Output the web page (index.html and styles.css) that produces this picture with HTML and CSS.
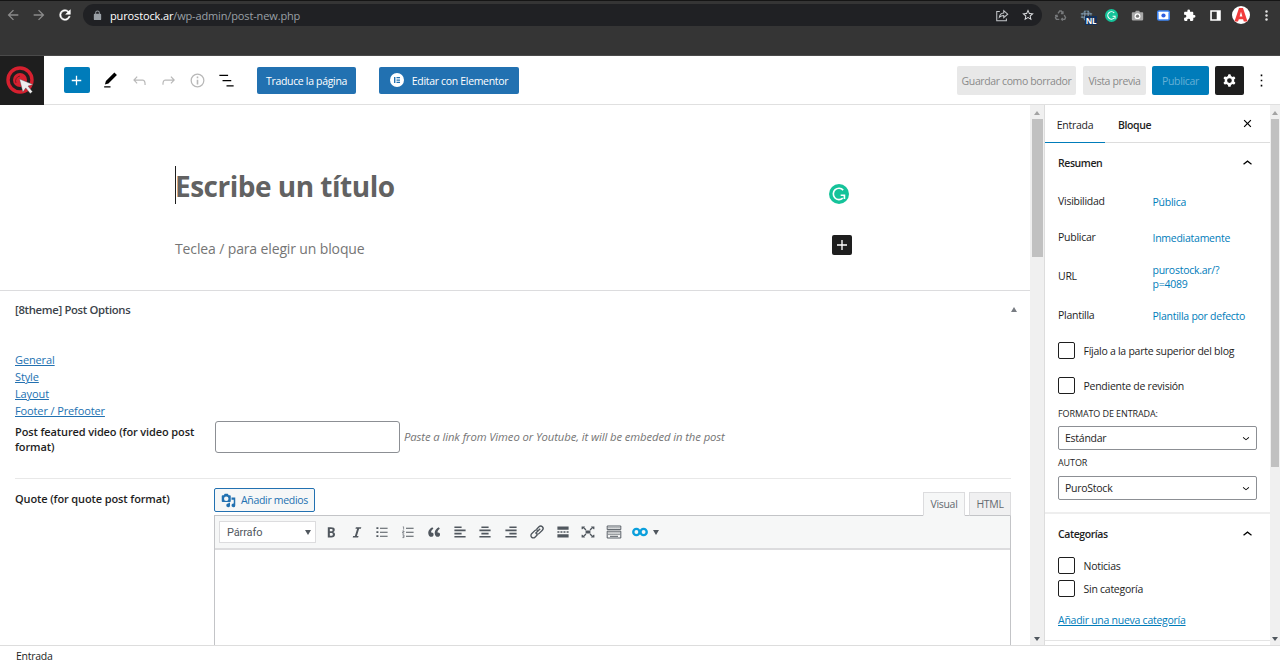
FILE: index.html
```
<!DOCTYPE html>
<html lang="es">
<head>
  <meta charset="utf-8">
  <title>Añadir nueva entrada</title>
  <meta name="viewport" content="width=device-width, initial-scale=1">
  <link rel="stylesheet" href="styles.css">
</head>
<body>
<div class="browser">
  <div class="nav-icons">
    <svg class="dim" viewBox="0 0 24 24"><path d="M20 11H7.830l5.590-5.590L12 4l-8 8 8 8 1.410-1.410L7.830 13H20z"/></svg>
    <svg class="dim" viewBox="0 0 24 24"><path d="M12 4l-1.410 1.410L16.170 11H4v2h12.170l-5.580 5.590L12 20l8-8z"/></svg>
    <svg class="reload" viewBox="0 0 24 24"><path d="M17.650 6.350A7.960 7.960 0 0 0 12 4a8 8 0 1 0 7.730 10h-2.080A6 6 0 1 1 12 6c1.660 0 3.140.69 4.220 1.780L13 11h7V4z"/></svg>
  </div>
  <div class="omnibox">
    <svg class="lock" viewBox="0 0 24 24"><path d="M18 8h-1V6A5 5 0 0 0 7 6v2H6a2 2 0 0 0-2 2v10c0 1.100.9 2 2 2h12a2 2 0 0 0 2-2V10a2 2 0 0 0-2-2zM9 6a3 3 0 0 1 6 0v2H9z"/></svg>
    <span class="url"><b>purostock.ar</b>/wp-admin/post-new.php</span>
    <svg viewBox="0 0 16 16" fill="none" stroke="#c4c7ca" stroke-width="1.2"><path d="M5.500 4H2v10.500h11V12M5 10.500c.4-3 2.200-4.700 5-4.900V3l4.500 4-4.500 4V8.500C8 8.500 6.500 9 5 10.500z"/></svg>
    <svg viewBox="0 0 24 24" fill="#dfe1e4"><path d="M22 9.240l-7.190-.62L12 2 9.190 8.630 2 9.240l5.460 4.730L5.820 21 12 17.270 18.180 21l-1.630-7.030L22 9.240zM12 15.400l-3.760 2.270 1-4.280-3.320-2.880 4.380-.38L12 6.100l1.710 4.040 4.380.38-3.320 2.880 1 4.280L12 15.400z"/></svg>
  </div>
  <div class="extensions">
    <span><svg viewBox="0 0 16 16" fill="none" stroke="#77797b" stroke-width="1.7"><path d="M5 5.500l2-3h2l1.800 2.800M11 2.800v2.700H8.500M12.500 7.500l1.700 3-1 2.200H9.500M10.800 11l-1.500 1.700 1.500 1.600M6.500 12.700H3l-1.200-2L3.500 8M1.300 8.300l2.300-.5.8 2.200"/></svg></span>
    <span class="nl"><svg viewBox="0 0 16 16" fill="none" stroke="#8fa8bd" stroke-width="1.2"><circle cx="8" cy="8" r="5.5" stroke="#4f7183"/><path d="M6 2v12M10 2v12M1 6h14M1 10h14"/></svg><i>NL</i></span>
    <span><svg viewBox="0 0 24 24"><circle cx="12" cy="12" r="12" fill="#15c39a"/><path d="M17 7.300A6.800 6.800 0 1 0 16.500 17M14 13.500h4.500V18" fill="none" stroke="#fff" stroke-width="2"/></svg></span>
    <span><svg viewBox="0 0 16 16"><path d="M2 4h3l1-2h4l1 2h3q1 0 1 1v8q0 1-1 1H2q-1 0-1-1V5q0-1 1-1z" fill="#a8a8a8"/><circle cx="8" cy="8.8" r="3.6" fill="#fff"/><circle cx="8" cy="8.8" r="2" fill="#777"/></svg></span>
    <span><svg viewBox="0 0 16 16"><rect x="0" y="1.500" width="16" height="13" rx="2.500" fill="#3f86f5"/><rect x="2" y="3.500" width="12" height="9" rx=".5" fill="#fff"/><circle cx="8" cy="8" r="2.600" fill="#2f5fe0"/></svg></span>
    <span><svg viewBox="0 0 24 24" fill="#fff"><path d="M20.500 11H19V7c0-1.100-.9-2-2-2h-4V3.500a2.500 2.500 0 0 0-5 0V5H4c-1.100 0-2 .9-2 2v3.800h1.500a2.700 2.700 0 0 1 0 5.400H2V20c0 1.100.9 2 2 2h3.800v-1.500a2.700 2.700 0 0 1 5.400 0V22H17c1.100 0 2-.9 2-2v-4h1.500a2.500 2.500 0 0 0 0-5z"/></svg></span>
    <span><svg viewBox="0 0 16 16"><path d="M1.500 1.500h13v13h-13zM3.500 3.500v9h6v-9z" fill="#fff" fill-rule="evenodd"/></svg></span>
    <span class="avatar"><svg viewBox="0 0 18 18"><circle cx="9" cy="9" r="9" fill="#fff"/><path d="M7 2h4l4.500 13.500h-3.700l-.7-2.300H6.800L6 15.500H2.500zM9 5.800L7.600 10.500h2.800z" fill="#f23c3c" fill-rule="evenodd"/></svg></span>
    <span><svg viewBox="0 0 16 16" fill="#e4e4e4"><circle cx="8" cy="3" r="1.5"/><circle cx="8" cy="8" r="1.5"/><circle cx="8" cy="13" r="1.5"/></svg></span>
  </div>
</div>

<div class="header">
  <div class="logo">
    <svg viewBox="0 0 44 48"><circle cx="20" cy="24" r="12" fill="none" stroke="#d6202f" stroke-width="3.4"/><circle cx="20" cy="24" r="7" fill="#d6202f"/><path d="M16 27a5 5 0 0 1 4-7" fill="none" stroke="#7c1720"/><path d="M19.500 23l13.500 5.500-5 1.600 4.500 5.600-2.300 1.800-4.400-5.600-3 4.200z" fill="#eee" stroke="#444" stroke-width=".4"/></svg>
  </div>
  <button class="inserter"><svg viewBox="0 0 24 24"><path d="M18 11.200h-5.200V6h-1.600v5.200H6v1.600h5.200V18h1.600v-5.200H18z"/></svg></button>
  <div class="tools">
    <svg viewBox="0 0 24 24"><path d="M20.100 5.100L16.900 2 6.200 12.700l-1.300 4.400 4.500-1.300L20.100 5.100zM4 20.800h8v-1.500H4v1.500z"/></svg>
    <svg class="off" viewBox="0 0 24 24"><path d="M18.300 11.700c-.6-.6-1.400-.9-2.300-.9H6.700l2.900-3.300-1.100-1-4.500 5L8.500 16l1-1-2.700-2.700H16c.5 0 .9.2 1.300.5 1 1 1 3.400 1 4.500v.3h1.500v-.2c0-1.500 0-4.300-1.500-5.700z"/></svg>
    <svg class="off" viewBox="0 0 24 24"><path d="M15.600 6.500l-1.100 1 2.900 3.300H8c-.9 0-1.700.3-2.300.9-1.400 1.500-1.400 4.200-1.400 5.600v.2h1.500v-.3c0-1.100 0-3.500 1-4.500.3-.3.7-.5 1.300-.5h9.200L14.500 15l1.100 1.100 4.600-4.600-4.600-5z"/></svg>
    <svg class="off" viewBox="0 0 24 24"><path d="M12 3.200a8.800 8.800 0 1 0 0 17.600 8.800 8.800 0 0 0 0-17.600zm0 16a7.200 7.200 0 1 1 0-14.400 7.200 7.200 0 0 1 0 14.400zM11 17h2v-6h-2v6zm0-8h2V7h-2v2z"/></svg>
    <svg viewBox="0 0 24 24"><path d="M3 4.700h11v1.500H3zM7 11.300h11v1.500H7zM12 18h9v1.500h-9z"/></svg>
  </div>
  <button class="btn translate">Traduce la página</button>
  <button class="btn elementor"><svg viewBox="0 0 14 14"><circle cx="7" cy="7" r="7" fill="#fff"/><path d="M4 4h1.400v6H4zM6.500 4H10v1.300H6.500zM6.500 6.400H10v1.300H6.500zM6.500 8.700H10V10H6.500z" fill="#2271b1"/></svg>Editar con Elementor</button>
  <div class="settings">
    <button class="btn draft">Guardar como borrador</button>
    <button class="btn preview">Vista previa</button>
    <button class="btn publish">Publicar</button>
    <button class="btn cog"><svg viewBox="0 0 24 24"><path fill-rule="evenodd" d="M10.289 4.836A1 1 0 0111.275 4h1.306a1 1 0 01.987.836l.244 1.466c.787.26 1.503.679 2.108 1.218l1.393-.522a1 1 0 011.216.437l.653 1.130a1 1 0 01-.23 1.273l-1.148.944a6.025 6.025 0 010 2.435l1.149.946a1 1 0 01.23 1.272l-.653 1.130a1 1 0 01-1.216.437l-1.394-.522c-.605.54-1.320.958-2.108 1.218l-.244 1.466a1 1 0 01-.987.836h-1.306a1 1 0 01-.986-.836l-.244-1.466a5.995 5.995 0 01-2.108-1.218l-1.394.522a1 1 0 01-1.217-.436l-.653-1.131a1 1 0 01.23-1.272l1.149-.946a6.026 6.026 0 010-2.435l-1.148-.944a1 1 0 01-.23-1.272l.653-1.131a1 1 0 011.217-.437l1.393.522a5.994 5.994 0 012.108-1.218l.244-1.466zM14.929 12a3 3 0 11-6 0 3 3 0 016 0z"/></svg></button>
    <svg class="dots" viewBox="0 0 24 24"><path d="M11 4.500h2v2h-2zM11 11h2v2h-2zM11 17.500h2v2h-2z"/></svg>
  </div>
</div>

<div class="body">
  <div class="content">
    <div class="canvas">
      <h1>Escribe un título</h1>
      <div class="paragraph"><span>Teclea / para elegir un bloque</span>
        <button class="add"><svg viewBox="0 0 24 24"><path d="M18 11.200h-5.200V6h-1.600v5.200H6v1.600h5.200V18h1.600v-5.200H18z"/></svg></button>
      </div>
      <svg class="grammarly" viewBox="0 0 24 24"><circle cx="12" cy="12" r="12" fill="#15c39a"/><path d="M17 7.300A6.800 6.800 0 1 0 16.500 17M14 13.500h4.500V18" fill="none" stroke="#fff" stroke-width="2"/></svg>
    </div>
    <div class="metabox">
      <h2><span>[8theme] Post Options</span><i class="tri up"></i></h2>
      <ul>
        <li><a>General</a></li>
        <li><a>Style</a></li>
        <li><a>Layout</a></li>
        <li><a>Footer / Prefooter</a></li>
      </ul>
      <div class="field video">
        <label>Post featured video (for video post<br>format)</label>
        <input type="text">
        <em>Paste a link from Vimeo or Youtube, it will be embeded in the post</em>
      </div>
      <div class="field quote">
        <label>Quote (for quote post format)</label>
        <div class="editor">
          <div class="editor-top">
            <button class="media"><svg viewBox="0 0 20 20"><path d="M13 11V4c0-.55-.45-1-1-1h-1.670L9 1H5L3.670 3H2c-.55 0-1 .45-1 1v7c0 .55.45 1 1 1h10c.55 0 1-.45 1-1zM7 4.500a3 3 0 1 1 0 6 3 3 0 0 1 0-6zM14 6h5v10.500a2.500 2.500 0 1 1-2-2.450V9h-3V6zM10 14.050V13h2v3.500a2.500 2.500 0 1 1-2-2.450z"/></svg>Añadir medios</button>
            <span class="tab on">Visual</span>
            <span class="tab">HTML</span>
          </div>
          <div class="mce">
            <div class="toolbar">
              <div class="format">Párrafo<i class="tri"></i></div>
              <div class="mce-icons">
                <svg viewBox="0 0 20 20"><path d="M6 4v13h4.540c1.370 0 2.460-.33 3.260-1 .8-.66 1.200-1.580 1.200-2.770 0-.84-.17-1.510-.51-2.010s-.9-.85-1.670-1.030v-.09c.57-.1 1.020-.4 1.360-.9s.51-1.130.51-1.910c0-1.140-.39-1.980-1.170-2.500C12.750 4.260 11.500 4 9.780 4H6zm2.570 5.150V6.260h1.360c.73 0 1.270.11 1.610.32.340.22.510.58.510 1.070 0 .54-.16.92-.47 1.150s-.82.35-1.510.35h-1.500zm0 2.190h1.600c1.440 0 2.160.53 2.160 1.610 0 .6-.17 1.050-.51 1.340s-.86.430-1.570.430H8.570v-3.380z"/></svg>
                <svg viewBox="0 0 20 20"><path d="M14.780 6h-2.130l-2.800 9h2.120l-.62 2H4.600l.62-2h2.140l2.800-9H8.030l.62-2h6.750z"/></svg>
                <svg viewBox="0 0 20 20"><path d="M3 4h2.500v2.300H3zM3 9h2.500v2.300H3zM3 14h2.500v2.300H3zM7.500 4.600H17v1.300H7.500zM7.500 9.600H17v1.300H7.500zM7.500 14.600H17v1.300H7.500z"/></svg>
                <svg viewBox="0 0 20 20"><path d="M7.500 4.600H17v1.300H7.500zM7.500 9.600H17v1.300H7.500zM7.500 14.600H17v1.300H7.500z"/><path class="line" d="M3.500 3.500h1v3.500M3 8.700h2v1.300H3.300v1.500h2M3 13.500h2v3.500H3M3.500 15.200h1.500"/></svg>
                <svg viewBox="0 0 20 20"><path d="M9.490 13.220c0-.74-.2-1.380-.61-1.900-.62-.78-1.830-.88-2.530-.72-.29-1.650 1.110-3.750 2.920-4.650L7.880 4c-2.730 1.300-5.420 4.280-4.960 8.050C3.210 14.430 4.590 16 6.540 16c.85 0 1.560-.25 2.120-.75s.83-1.180.83-2.030zm8.050 0c0-.74-.2-1.380-.61-1.900-.63-.78-1.830-.88-2.530-.72-.29-1.650 1.110-3.750 2.920-4.650L15.930 4c-2.730 1.300-5.410 4.280-4.950 8.050.29 2.380 1.660 3.950 3.610 3.950.85 0 1.560-.25 2.120-.75s.83-1.180.83-2.030z"/></svg>
                <svg viewBox="0 0 20 20"><path d="M3 3h9v2H3zM3 7h14v2H3zM3 11h9v2H3zM3 15h14v2H3z"/></svg>
                <svg viewBox="0 0 20 20"><path d="M5.500 3h9v2h-9zM3 7h14v2H3zM5.500 11h9v2h-9zM3 15h14v2H3z"/></svg>
                <svg viewBox="0 0 20 20"><path d="M8 3h9v2H8zM3 7h14v2H3zM8 11h9v2H8zM3 15h14v2H3z"/></svg>
                <svg class="stroked link" viewBox="0 0 20 20"><path d="M8 12l6-6M9.500 6.500l3-3a2.900 2.900 0 0 1 4.200 4.200l-4 4a2.900 2.900 0 0 1-3.700.4M10.500 13.500l-3 3a2.900 2.900 0 0 1-4.200-4.200l4-4A2.900 2.900 0 0 1 11 7.900"/></svg>
                <svg viewBox="0 0 20 20"><path d="M3 3h14v4.200H3zM3 9h2.500v1.900H3zM6.800 9h2.500v1.900H6.800zM10.600 9h2.500v1.900h-2.500zM14.500 9H17v1.900h-2.500zM3 12.800h14V17H3z"/></svg>
                <svg viewBox="0 0 20 20"><path d="M2 3h4.500L5.300 4.200 8 6.800 6.800 8 4.200 5.300 3 6.500H2zM18 3h-4.500l1.200 1.200L12 6.800 13.200 8l2.600-2.700L17 6.500h1zM2 17h4.500l-1.200-1.200L8 13.200 6.800 12l-2.600 2.700L3 13.500H2zM18 17h-4.500l1.200-1.200-2.700-2.600 1.200-1.200 2.600 2.700 1.200-1.200h1zM7 8h6v4H7z"/></svg>
                <svg class="stroked keys" viewBox="0 0 20 20"><path d="M1.500 2.500h17v4.500h-17zM1.500 9h17v8.500h-17z"/><path d="M3 4.800h14M3 11.200h14M3 13.200h14" stroke-dasharray="1.500 1"/><path d="M5 15.400h10"/></svg>
                <svg class="stroked oo" viewBox="0 0 20 20"><circle cx="5.5" cy="10" r="3.9"/><circle cx="14.5" cy="10" r="3.9"/></svg>
                <i class="tri"></i>
              </div>
            </div>
          </div>
        </div>
      </div>
    </div>
  </div>
  <div class="scrollbar main-bar"><i class="tri up"></i><div class="thumb"></div><i class="tri"></i></div>

  <div class="sidebar">
    <div class="side-tabs">
      <span class="active">Entrada</span><span class="block">Bloque</span>
      <svg viewBox="0 0 24 24"><path d="M12 13.060l3.712 3.713 1.061-1.060L13.061 12l3.712-3.712-1.060-1.060L12 10.938 8.288 7.227l-1.061 1.060L10.939 12l-3.712 3.712 1.060 1.061z"/></svg>
    </div>
    <div class="panel summary">
      <h3>Resumen<svg viewBox="0 0 24 24"><path d="M6.500 12.400L12 8l5.500 4.400-.9 1.200L12 10l-4.500 3.600z"/></svg></h3>
      <dl>
        <dt>Visibilidad</dt><dd>Pública</dd>
        <dt>Publicar</dt><dd>Inmediatamente</dd>
        <dt>URL</dt><dd>purostock.ar/?<br>p=4089</dd>
        <dt>Plantilla</dt><dd>Plantilla por defecto</dd>
      </dl>
      <div class="check"><i></i>Fíjalo a la parte superior del blog</div>
      <div class="check"><i></i>Pendiente de revisión</div>
      <div class="caption">FORMATO DE ENTRADA:</div>
      <div class="select">Estándar<svg viewBox="0 0 24 24"><path d="M17.500 11.600L12 16l-5.500-4.400.9-1.200L12 14l4.500-3.600z"/></svg></div>
      <div class="caption author">AUTOR</div>
      <div class="select">PuroStock<svg viewBox="0 0 24 24"><path d="M17.500 11.600L12 16l-5.500-4.400.9-1.200L12 14l4.500-3.600z"/></svg></div>
    </div>
    <div class="panel categories">
      <h3>Categorías<svg viewBox="0 0 24 24"><path d="M6.500 12.400L12 8l5.500 4.400-.9 1.200L12 10l-4.500 3.600z"/></svg></h3>
      <div class="check"><i></i>Noticias</div>
      <div class="check"><i></i>Sin categoría</div>
      <a>Añadir una nueva categoría</a>
    </div>
  </div>
  <div class="scrollbar side-bar"><i class="tri up"></i><div class="thumb"></div><i class="tri"></i></div>
</div>
<div class="footer">Entrada</div>
</body>
</html>
```
FILE: styles.css
```
* {
  box-sizing: border-box;
}
body {
  margin: 0;
  height: 663px;
  overflow: hidden;
  display: flex;
  flex-direction: column;
  font-family: "Open Sans", "Noto Sans", sans-serif;
  font-size: 10.5px;
  letter-spacing: -0.26px;
  color: #1e1e1e;
  background: #fff;
}
svg {
  display: block;
  flex: none;
}
button {
  font: inherit;
  letter-spacing: inherit;
  border: 0;
  padding: 0;
}
h1, h2, h3, ul, dl, dd {
  margin: 0;
  padding: 0;
}
a {
  color: #2271b1;
  text-decoration: underline;
}

/* browser bar */
.browser {
  height: 56px;
  flex: none;
  display: flex;
  align-items: flex-start;
  background: #353535;
  border-top: 1px solid #151515;
  border-bottom: 1px solid #4a4a4a;
  padding-top: 3px;
}
.nav-icons {
  width: 83px;
  height: 22px;
  display: flex;
  align-items: center;
  gap: 10px;
  padding-left: 5px;
}
.nav-icons svg {
  width: 16px;
  height: 16px;
  fill: #fff;
}
.nav-icons .dim {
  fill: #8b8b8b;
}
.nav-icons .reload {
  stroke: #fff;
  stroke-width: .8;
}
.omnibox {
  width: 959px;
  height: 22px;
  border-radius: 11px;
  background: #202124;
  display: flex;
  align-items: center;
  gap: 12px;
  padding: 0 7px 0 9px;
}
.omnibox svg {
  width: 14px;
  height: 14px;
}
.omnibox .lock {
  width: 11px;
  height: 11px;
  fill: #9aa0a6;
}
.url {
  flex: 1;
  margin-left: -5px;
  font-size: 11px;
  letter-spacing: -0.14px;
  color: #9aa0a6;
}
.url b {
  font-weight: 400;
  color: #fff;
}
.extensions {
  display: grid;
  grid-template-columns: repeat(9, 25.8px);
  margin-left: 5.500px;
  height: 22px;
  align-items: center;
  justify-items: center;
}
.extensions svg {
  width: 13px;
  height: 13px;
}
.extensions .avatar svg {
  width: 18px;
  height: 18px;
}
.nl {
  position: relative;
}
.nl i {
  position: absolute;
  left: 5px;
  top: 7px;
  padding: 0 1px;
  background: #12305a;
  color: #fff;
  font: bold 8px/9px "Open Sans", sans-serif;
}

/* editor header */
.header {
  height: 49px;
  flex: none;
  display: flex;
  align-items: center;
  border-bottom: 1px solid #e0e0e0;
}
.logo {
  width: 44px;
  height: 49px;
  background: #1e1e1e;
}
.logo svg {
  width: 44px;
  height: 48px;
}
.inserter {
  width: 26px;
  height: 26px;
  margin-left: 19.500px;
  border-radius: 2px;
  background: #007cba;
  display: flex;
  align-items: center;
  justify-content: center;
}
.inserter svg, .tools svg, .cog svg, .dots {
  width: 19px;
  height: 19px;
}
.inserter svg, .cog svg {
  fill: #fff;
}
.tools {
  display: flex;
  gap: 10px;
  margin-left: 11.500px;
}
.tools .off {
  fill: #b8b8b8;
}
.btn {
  height: 27px;
  border-radius: 2px;
  background: #2271b1;
  color: #fff;
  display: flex;
  align-items: center;
  justify-content: center;
  white-space: nowrap;
  letter-spacing: -0.32px;
  padding-top: 1px;
}
.translate {
  width: 99px;
  margin-left: 21px;
}
.elementor {
  width: 140px;
  margin-left: 23px;
  gap: 8px;
}
.elementor svg {
  width: 14px;
  height: 14px;
  margin-top: -2px;
}
.settings {
  display: flex;
  align-items: center;
  margin-left: auto;
  padding-right: 9px;
}
.settings .btn {
  height: 29px;
  padding-top: 2px;
}
.settings .draft, .settings .preview {
  background: #e8e8e8;
  color: #8a8a8a;
  letter-spacing: -0.38px;
}
.draft {
  width: 119px;
  margin-right: 7px;
}
.preview {
  width: 63px;
  margin-right: 6px;
}
.settings .publish {
  width: 57px;
  margin-right: 6px;
  background: #007cba;
  color: #66b0d6;
}
.settings .cog {
  width: 29px;
  margin-right: 8px;
  padding: 0;
  background: #1e1e1e;
}

/* content */
.body {
  height: 540px;
  flex: none;
  display: flex;
}
.content {
  width: 1030px;
  overflow: hidden;
}
.canvas {
  position: relative;
  height: 186px;
  padding: 61px 178px 0 175px;
  border-bottom: 1px solid #dcdcde;
}
h1 {
  height: 38px;
  border-left: 1px solid #1e1e1e;
  font-size: 28px;
  line-height: 41px;
  letter-spacing: -0.5px;
  text-indent: -1px;
  color: #626262;
}
.paragraph {
  display: flex;
  justify-content: space-between;
  margin-top: 31px;
  font-size: 14px;
  line-height: 28px;
  letter-spacing: -0.13px;
  color: #757575;
}
.add {
  width: 20px;
  height: 20px;
  border-radius: 2px;
  background: #1e1e1e;
}
.add svg {
  width: 20px;
  height: 20px;
  fill: #fff;
}
.grammarly {
  position: absolute;
  left: 829px;
  top: 79px;
  width: 20px;
  height: 20px;
}
.metabox {
  padding: 0 19px 0 15px;
  font-size: 11px;
  letter-spacing: -0.12px;
}
h2 {
  height: 37px;
  display: flex;
  align-items: center;
  justify-content: space-between;
  margin-right: -6px;
  font-size: 11.300px;
  font-weight: 600;
  letter-spacing: -0.32px;
  color: #3c434a;
}
.tri {
  width: 0;
  height: 0;
  border: 3.500px solid transparent;
  border-top: 5px solid #50575e;
  border-bottom: 0;
}
.tri.up {
  border-top: 0;
  border-bottom: 5px solid #787c82;
}
ul {
  list-style: none;
  padding-top: 23px;
  line-height: 17px;
}
.field {
  display: flex;
}
.field label {
  width: 199px;
  font-weight: 600;
  line-height: 14.500px;
}
.video {
  height: 60px;
  padding-top: 2px;
  border-bottom: 1px solid #e8e8e8;
}
.video label {
  padding-top: 4px;
}
.video input {
  width: 185px;
  height: 32px;
  border: 1px solid #8c8f94;
  border-radius: 3px;
  margin-left: 1px;
}
.video em {
  margin-left: 4px;
  font-size: 11.300px;
  letter-spacing: -0.1px;
  line-height: 31px;
  color: #757575;
}
.quote label {
  padding-top: 13px;
}
.editor {
  width: 797px;
  padding-top: 9px;
}
.editor-top {
  height: 28px;
  display: flex;
  align-items: flex-start;
  font-size: 10.500px;
  letter-spacing: -0.3px;
}
.media {
  width: 101px;
  height: 24px;
  margin-right: auto;
  display: flex;
  align-items: center;
  justify-content: center;
  gap: 5px;
  border: 1px solid #2271b1;
  border-radius: 2px;
  background: #f6f7f7;
  color: #2271b1;
}
.media svg {
  width: 15px;
  height: 15px;
  fill: #2271b1;
}
.tab {
  width: 42px;
  height: 24px;
  margin: 4px 0 0 4px;
  border: 1px solid #dcdcde;
  border-bottom-color: #c3c4c7;
  background: #f0f0f1;
  color: #646970;
  text-align: center;
  line-height: 23px;
}
.tab.on {
  background: #f6f7f7;
  border-bottom-color: #f6f7f7;
}
.mce {
  height: 150px;
  margin-top: -1px;
  border: 1px solid #c3c4c7;
}
.tab {
  position: relative;
}
.toolbar {
  height: 34px;
  display: flex;
  align-items: center;
  padding-left: 4px;
  background: #f6f7f7;
  border-bottom: 2px solid #dcdcde;
}
.format {
  width: 97px;
  height: 22px;
  display: flex;
  align-items: center;
  justify-content: space-between;
  padding: 0 4px 0 7px;
  border: 1px solid #dcdcde;
  background: #fff;
  color: #50575e;
  font-family: Roboto, sans-serif;
}
.mce-icons {
  display: grid;
  grid-template-columns: repeat(13, 25.750px) 7px;
  align-items: center;
  justify-items: center;
  margin-left: 2px;
}
.mce-icons svg {
  width: 16px;
  height: 16px;
  fill: #50575e;
}
.mce-icons .line {
  fill: none;
  stroke: #50575e;
  stroke-width: .8;
}
.mce-icons .stroked {
  fill: none;
  stroke: #50575e;
}
.mce-icons .link {
  stroke-width: 1.700;
}
.mce-icons .keys {
  stroke-width: 1.200;
}
.mce-icons .oo {
  stroke: #0a9fdc;
  stroke-width: 3;
}

/* scrollbars */
.scrollbar {
  display: flex;
  flex-direction: column;
  align-items: center;
  background: #f0f0f0;
  padding: 6px 0 4px;
}
.main-bar {
  width: 14px;
}
.side-bar {
  width: 10px;
}
.scrollbar .tri {
  border-width: 4px 3px 0;
}
.scrollbar .tri.up {
  border-width: 0 3px 4px;
  border-bottom-color: #a3a3a3;
}
.thumb {
  width: 11px;
  margin: 4px 0 auto;
  background: #c1c1c1;
}
.main-bar .thumb {
  height: 138px;
}
.side-bar .thumb {
  width: 8px;
  height: 348px;
}

/* sidebar */
.sidebar {
  width: 226px;
  overflow: hidden;
  border-left: 1px solid #ddd;
}
.side-tabs {
  height: 38px;
  display: flex;
  border-bottom: 1px solid #ddd;
  line-height: 40px;
}
.side-tabs .active {
  width: 60px;
  text-align: center;
  border-bottom: 1px solid #007cba;
  margin-bottom: -1px;
}
.side-tabs .block {
  margin-left: 13px;
  font-weight: 600;
  letter-spacing: -0.4px;
}
.side-tabs svg {
  width: 19px;
  height: 19px;
  margin: 9px 13px 0 auto;
}
.panel {
  padding: 0 13px;
}
h3 {
  height: 40px;
  display: flex;
  align-items: center;
  justify-content: space-between;
  font-size: 10.500px;
  font-weight: 600;
  letter-spacing: -0.42px;
}
h3 svg {
  width: 19px;
  height: 19px;
}
dl {
  display: grid;
  grid-template-columns: 94.500px 1fr;
  grid-template-rows: 36px 35px 43px 36px;
  align-items: center;
  line-height: 14px;
}
dd {
  color: #007cba;
  padding-top: 2px;
}
.check {
  display: flex;
  align-items: center;
  gap: 9px;
  height: 35px;
}
.check i {
  width: 16.500px;
  height: 16.500px;
  border: 1px solid #1e1e1e;
  border-radius: 2px;
}
.caption {
  font-size: 9px;
  line-height: 12px;
  letter-spacing: -0.1px;
  margin: 5px 0 6px;
}
.caption.author {
  margin: 7px 0;
}
.select {
  height: 24px;
  display: flex;
  align-items: center;
  justify-content: space-between;
  padding: 0 3px 0 6px;
  border: 1px solid #8c8f94;
  border-radius: 2px;
}
.select svg {
  width: 14px;
  height: 14px;
}
.summary {
  height: 371px;
  border-bottom: 2px solid #eee;
}
.categories {
  height: 127px;
  border-bottom: 1px solid #e4e4e4;
}
.categories .check {
  height: 23px;
}
.categories a {
  display: block;
  margin-top: 13px;
  color: #007cba;
}
.footer {
  flex: 1;
  border-top: 1px solid #ddd;
  padding: 3px 16px;
  line-height: 14px;
}
```
